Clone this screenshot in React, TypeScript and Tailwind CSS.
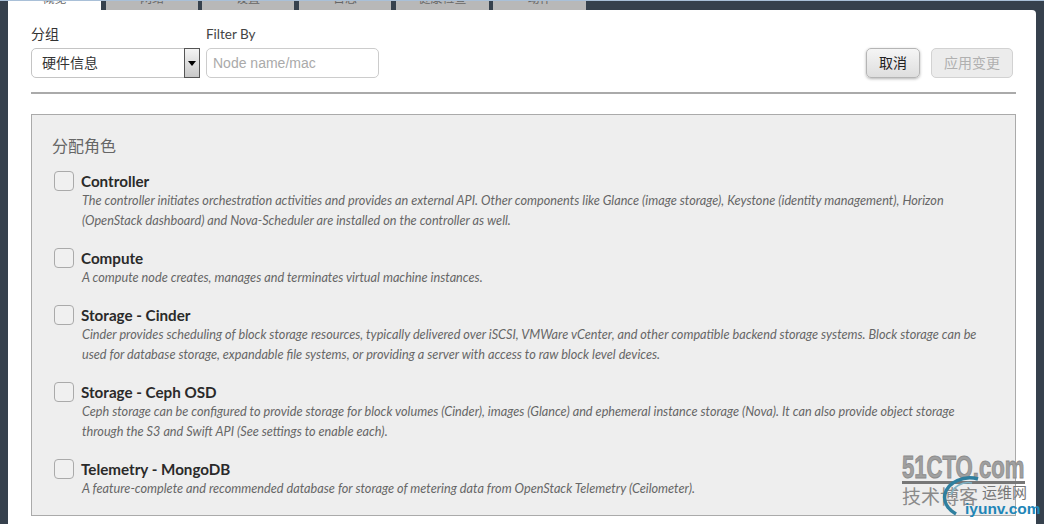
const latin = "font-['Lato','Noto_Sans_CJK_SC',sans-serif]";

const tabs = [
  { label: "概览", w: "w-[93px]", gap: "mr-[5px]" },
  { label: "网络", w: "w-[92px]", gap: "mr-[4px]" },
  { label: "设置", w: "w-[92px]", gap: "mr-[5px]" },
  { label: "日志", w: "w-[92px]", gap: "mr-[5px]" },
  { label: "健康检查", w: "w-[93px]", gap: "mr-[4px]" },
  { label: "动作", w: "w-[93px]", gap: "" },
];

const roles = [
  {
    name: "Controller",
    lines: [
      "The controller initiates orchestration activities and provides an external API. Other components like Glance (image storage), Keystone (identity management), Horizon",
      "(OpenStack dashboard) and Nova-Scheduler are installed on the controller as well.",
    ],
  },
  {
    name: "Compute",
    lines: ["A compute node creates, manages and terminates virtual machine instances."],
  },
  {
    name: "Storage - Cinder",
    lines: [
      "Cinder provides scheduling of block storage resources, typically delivered over iSCSI, VMWare vCenter, and other compatible backend storage systems. Block storage can be",
      "used for database storage, expandable file systems, or providing a server with access to raw block level devices.",
    ],
  },
  {
    name: "Storage - Ceph OSD",
    lines: [
      "Ceph storage can be configured to provide storage for block volumes (Cinder), images (Glance) and ephemeral instance storage (Nova). It can also provide object storage",
      "through the S3 and Swift API (See settings to enable each).",
    ],
  },
  {
    name: "Telemetry - MongoDB",
    lines: ["A feature-complete and recommended database for storage of metering data from OpenStack Telemetry (Ceilometer)."],
  },
];

function Role({ name, lines }: { name: string; lines: string[] }) {
  return (
    <div className="flex mb-[17px]">
      <div className="w-[20px] h-[20px] ml-[2px] mr-[7px] shrink-0 rounded-[4px] border border-[#aaaaaa] bg-[#f0f0f0]" />
      <div className="min-w-0">
        <div className="h-[20px] text-[15.2px] leading-[21px] font-bold text-[#2a2a2a] whitespace-nowrap">{name}</div>
        {lines.map((l) => (
          <div key={l} className="h-[20px] pl-[1px] text-[12.7px] leading-[18px] italic text-[#666666] whitespace-nowrap">
            {l}
          </div>
        ))}
      </div>
    </div>
  );
}

function Watermark() {
  return (
    <div className="absolute left-[902px] top-[452px] w-[142px] h-[72px] pointer-events-none">
      <div className="font-['Liberation_Sans',sans-serif] text-[32px] leading-[30px] font-bold text-[#a0a0a0] [-webkit-text-stroke:1px_#8c8c8c] [transform:scaleX(0.69)] origin-left whitespace-nowrap">
        51CTO.com
      </div>
      <div className="h-[3px] w-[123px] bg-[#777777] -mt-[1px]" />
      <div className="absolute left-0 top-[33px] text-[19px] leading-[22px] text-[#8a8a8a] font-['Noto_Sans_CJK_SC',sans-serif] whitespace-nowrap">
        技术博客
      </div>
      <div className="absolute left-[80px] top-[31px] text-[15px] leading-[18px] text-[#777777] font-['Noto_Sans_CJK_SC',sans-serif] whitespace-nowrap">
        运维网
      </div>
      <svg className="absolute left-[40px] top-[24px]" width="38" height="40" viewBox="0 0 38 40" fill="none">
        <path d="M36 3C22 -1 6 6 3 18C1 27 7 34 14 38" stroke="#2f7f9f" strokeWidth="3.5" />
        <path d="M30 7C20 5 11 11 9 19" stroke="#7fb4c8" strokeWidth="1.5" />
      </svg>
      <div className="absolute left-[63px] top-[48px] text-[15.5px] leading-[18px] font-bold text-[#1f86b8] font-['Liberation_Sans',sans-serif] whitespace-nowrap">
        iyunv.com
      </div>
    </div>
  );
}

export default function App() {
  return (
    <div className={`relative w-[1044px] h-[524px] overflow-hidden bg-[#36414d] flex flex-col ${latin}`}>
      <div className="h-[1px] bg-[#a9c0d8] shrink-0" />
      <div className="flex h-[9px] shrink-0 pl-[8px] overflow-hidden">
        {tabs.map((t, i) => (
          <div
            key={t.label}
            className={`${t.w} ${t.gap} h-[9px] flex items-end justify-center overflow-hidden text-[12px] leading-[14px] text-[#666666] ${
              i === 0 ? "bg-white" : "bg-[#b8b8b8]"
            }`}
          >
            <span className="whitespace-nowrap mb-[4px]">{t.label}</span>
          </div>
        ))}
      </div>
      <div className="flex-1 ml-[8px] mr-[8px] bg-white rounded-tr-[4px] pl-[23px] pr-[20px] min-h-0">
        <div className="flex items-start h-[82px] pt-[14px]">
          <div className="w-[169px] mr-[6px] shrink-0">
            <div className="h-[24px] text-[14px] leading-[20px] text-[#333333]">分组</div>
            <div className="flex h-[30px] rounded-l-[5px] rounded-r-[2px] border border-[#c4c4c4] bg-white">
              <div className="flex-1 pl-[10px] text-[14px] leading-[28px] text-[#333333]">硬件信息</div>
              <div className="w-[16px] -my-[1px] -mr-[1px] border border-[#555555] bg-gradient-to-b from-[#f4f4f4] to-[#c8c8c8] flex items-center justify-center">
                <div className="w-0 h-0 border-x-[4px] border-x-transparent border-t-[5px] border-t-black" />
              </div>
            </div>
          </div>
          <div className="w-[173px] shrink-0">
            <div className="h-[24px] text-[13.5px] leading-[20px] text-[#444444]">Filter By</div>
            <input
              readOnly
              placeholder="Node name/mac"
              className="block w-full h-[30px] rounded-[5px] border border-[#cccccc] bg-white px-[6px] text-[14px] font-['Liberation_Sans',sans-serif] outline-none placeholder:text-[#aaaaaa]"
            />
          </div>
          <div className="flex-1" />
          <div className="flex mt-[24px] mr-[3px]">
            <div className="w-[54px] h-[30px] mr-[11px] rounded-[5px] border border-[#b5b5b5] bg-gradient-to-b from-[#f5f5f5] to-[#dedede] shadow-[0_1px_3px_rgba(0,0,0,0.3)] text-center text-[14px] leading-[28px] text-[#222222]">
              取消
            </div>
            <div className="w-[82px] h-[30px] rounded-[5px] border border-[#d2d2d2] bg-[#ececec] text-center text-[14px] leading-[28px] text-[#b0b0b0]">
              应用变更
            </div>
          </div>
        </div>
        <div className="h-[2px] bg-[#aaaaaa] mb-[20px]" />
        <div className="h-[402px] border border-[#aaaaaa] bg-[#eeeeee] pl-[20px] pt-[19px] overflow-hidden">
          <div className="h-[37px] text-[16px] leading-[24px] text-[#666666]">分配角色</div>
          {roles.map((r) => (
            <Role key={r.name} name={r.name} lines={r.lines} />
          ))}
        </div>
      </div>
      <Watermark />
    </div>
  );
}
